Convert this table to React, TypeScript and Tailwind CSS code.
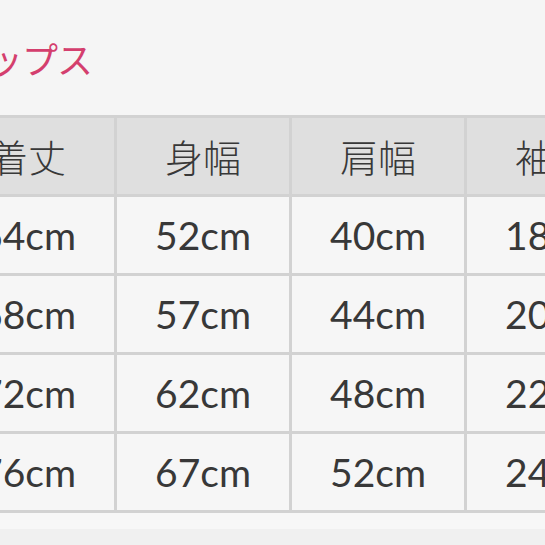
const headers = ['着丈', '身幅', '肩幅', '袖丈']

const rows = [
  ['64cm', '52cm', '40cm', '18cm'],
  ['68cm', '57cm', '44cm', '20cm'],
  ['72cm', '62cm', '48cm', '22cm'],
  ['76cm', '67cm', '52cm', '24cm'],
]

export default function App() {
  return (
    <div className="w-[545px] h-[545px] overflow-hidden bg-[#f5f5f5] text-[#383838]">
      <h2
        className="ml-[-48px] pt-[40px] h-[115px] text-[36px] leading-none text-[#d43f6e] tracking-[-1px]"
        style={{ fontFamily: '"Noto Sans CJK JP", "Noto Sans", sans-serif' }}
      >
        トップス
      </h2>

      <div className="ml-[-61px] w-max grid grid-cols-[repeat(4,172px)] auto-rows-[76px] gap-[3px] p-[3px] bg-[#d2d2d2]">
        {headers.map(h => (
          <div
            key={h}
            className="bg-[#dfdfdf] flex items-center justify-center text-[38px] leading-none"
            style={{ fontFamily: '"Noto Sans CJK JP", sans-serif', fontWeight: 300 }}
          >
            {h}
          </div>
        ))}
        {rows.flat().map((v, i) => (
          <div
            key={i}
            className="bg-[#f6f6f6] flex items-center justify-center text-[39px] leading-none pt-[1px]"
            style={{ fontFamily: 'Lato, "Liberation Sans", sans-serif' }}
          >
            {v}
          </div>
        ))}
      </div>

      <div className="h-[16px] bg-[#f7f7f7]" />
      <div className="h-[40px] bg-[#f0f0f0]" />
    </div>
  )
}
